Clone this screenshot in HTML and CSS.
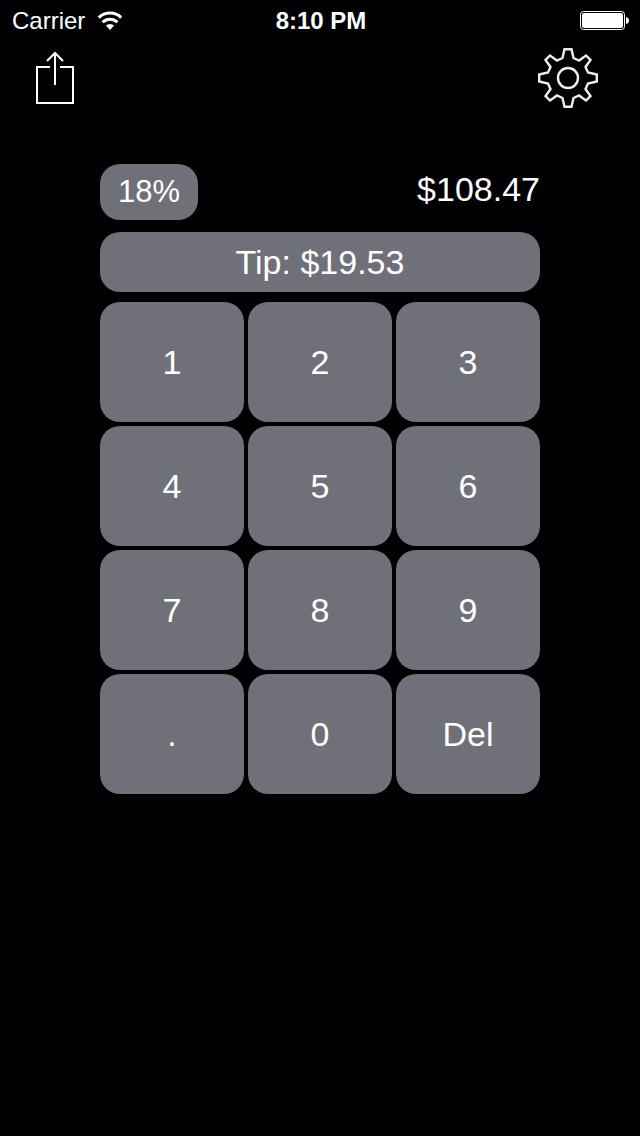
FILE: index.html
```html
<!DOCTYPE html>
<html lang="en">
<head>
  <meta charset="UTF-8">
  <meta name="viewport" content="width=device-width, initial-scale=1.0">
  <title>Tip Calculator</title>
  <link rel="stylesheet" href="styles.css">
</head>
<body>
  <div class="status-bar">
    <div class="carrier">
      <span>Carrier</span>
      <svg width="26" height="20" viewBox="0 0 26 20" aria-hidden="true">
        <path d="M1.8 6.600a16 16 0 0 1 22.4 0" fill="none" stroke="#fff" stroke-width="3"/>
        <path d="M5.600 11.200a10.600 10.600 0 0 1 14.800 0" fill="none" stroke="#fff" stroke-width="3"/>
        <path d="M8.9 14.6a5.8 5.8 0 0 1 8.2 0L13 19z" fill="#fff"/>
      </svg>
    </div>
    <div class="time">8:10 PM</div>
    <div class="battery">
      <svg width="50" height="20" viewBox="0 0 50 20" role="img" aria-label="Battery full">
        <rect x="0.5" y="0.5" width="44" height="18" rx="3" fill="none" stroke="#fff"/>
        <rect x="2" y="2" width="41" height="15" rx="2" fill="#fff"/>
        <path d="M46 6q3 .5 3 3.500t-3 3.500z" fill="#fff"/>
      </svg>
    </div>
  </div>

  <header class="toolbar">
    <button type="button" class="icon-button" aria-label="Share">
      <svg width="40" height="54" viewBox="0 0 40 54" fill="none" stroke="#fff" stroke-width="2">
        <path d="M15 16H2v36h36V16H25"/>
        <path d="M20 34V2M12 10l8-8 8 8"/>
      </svg>
    </button>
    <button type="button" class="icon-button" aria-label="Settings">
      <svg width="60" height="60" viewBox="0 0 60 60" fill="none" stroke="#eee" stroke-width="2.4">
        <path d="M26.500 1.200H33.500L35.500 10L41 12.500L48 7.500L52.500 12L47.500 19L50 24.500L58.800 26.500V33.500L50 35.500L47.500 41L52.500 48L48 52.500L41 47.500L35.500 50L33.500 58.800H26.500L24.500 50L19 47.500L12 52.500L7.500 48L12.500 41L10 35.500L1.200 33.500V26.500L10 24.500L12.500 19L7.500 12L12 7.500L19 12.500L24.500 10Z"/>
        <circle cx="30" cy="30" r="10"/>
      </svg>
    </button>
  </header>

  <main class="calculator">
    <div class="bill-row">
      <button type="button" class="percent">18%</button>
      <output class="bill">$108.47</output>
    </div>
    <output class="tip">Tip: $19.53</output>
    <div class="keypad">
      <button type="button" class="key">1</button>
      <button type="button" class="key">2</button>
      <button type="button" class="key">3</button>
      <button type="button" class="key">4</button>
      <button type="button" class="key">5</button>
      <button type="button" class="key">6</button>
      <button type="button" class="key">7</button>
      <button type="button" class="key">8</button>
      <button type="button" class="key">9</button>
      <button type="button" class="key">.</button>
      <button type="button" class="key">0</button>
      <button type="button" class="key">Del</button>
    </div>
  </main>
</body>
</html>
```

FILE: styles.css
```css
* {
  box-sizing: border-box;
}
body {
  margin: 0;
  min-height: 100vh;
  background-color: #010103;
  color: white;
  font-family: "Liberation Sans", Arial, sans-serif;
}
button {
  padding: 0;
  border: none;
  background: none;
  color: inherit;
  font: inherit;
  cursor: pointer;
}
svg {
  display: block;
}

.status-bar {
  display: grid;
  grid-template-columns: 1fr auto 1fr;
  align-items: center;
  height: 42px;
  padding: 0 10px 0 12px;
  font-size: 24px;
}
.carrier {
  display: flex;
  align-items: center;
  gap: 12px;
}
.time {
  font-weight: bold;
}
.battery {
  display: flex;
  justify-content: flex-end;
}

.toolbar {
  display: flex;
  justify-content: space-between;
  align-items: center;
  padding: 6px 42px 0 35px;
}

.calculator {
  padding: 56px 100px;
}
.bill-row {
  display: flex;
  justify-content: space-between;
  align-items: flex-start;
  margin-bottom: 12px;
}
.percent {
  width: 98px;
  height: 56px;
  border-radius: 20px;
  background: #707178;
  font-size: 31px;
}
.bill {
  font-size: 34px;
  line-height: 50px;
}
.tip {
  display: block;
  margin-bottom: 10px;
  border-radius: 20px;
  background: #707178;
  font-size: 34px;
  line-height: 60px;
  text-align: center;
}
.keypad {
  display: grid;
  grid-template-columns: repeat(3, 1fr);
  gap: 4px;
}
.key {
  height: 120px;
  border-radius: 20px;
  background: #707178;
  font-size: 34px;
}
.percent:active,
.key:active {
  background: #8a8b92;
}
```
